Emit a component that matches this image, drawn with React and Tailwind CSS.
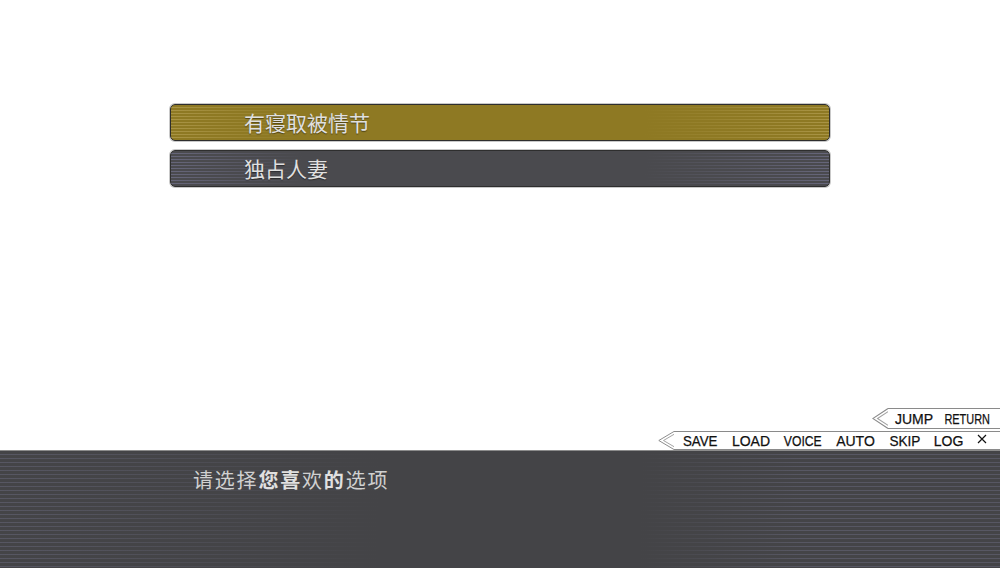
import React from "react";

const cjk = { fontFamily: '"Noto Sans CJK SC", "Noto Sans", sans-serif' };
const latin = { fontFamily: '"Liberation Sans", Arial, sans-serif' };

const Chevron = () => (
  <svg width="16" height="100%" viewBox="0 0 16 20" preserveAspectRatio="none" className="h-full shrink-0">
    <polygon points="16,0.5 0.8,10 16,19.5" fill="#ffffff" />
    <polyline points="16,0.5 0.8,10 16,19.5" fill="none" stroke="#8a8a8a" strokeWidth="1" />
    <polyline points="16,3.5 5.5,10 16,16.5" fill="none" stroke="#a0a0a0" strokeWidth="1" />
  </svg>
);

const CloseMark = () => (
  <svg width="10" height="10" viewBox="0 0 10 10" className="-mt-[3px]">
    <path d="M1 1 L9 9 M9 1 L1 9" stroke="#111" strokeWidth="1.2" fill="none" />
  </svg>
);

// widths measured from the reference, squeeze keeps each word inside its slot
const Tab = ({ items, className, gap, pl, pr }) => (
  <div className={`flex self-end ${className}`}>
    <Chevron />
    <div
      className={`flex items-center bg-white border-y border-[#8a8a8a] text-[14px] text-[#111] [-webkit-text-stroke:0.25px_#111] ${gap} ${pl} ${pr}`}
      style={latin}
    >
      {items.map((it) => (
        <span key={it.k || it.t} className={`inline-flex justify-center leading-none whitespace-nowrap ${it.w}`}>
          <span className={`inline-block ${it.s}`}>{it.t}</span>
        </span>
      ))}
    </div>
  </div>
);

const topItems = [
  { t: "JUMP", w: "w-[38px]", s: "scale-x-100" },
  { t: "RETURN", w: "w-[45px]", s: "scale-x-[0.78]" },
];

const bottomItems = [
  { t: "SAVE", w: "w-[36px]", s: "scale-x-[0.95]" },
  { t: "LOAD", w: "w-[38px]", s: "scale-x-100" },
  { t: "VOICE", w: "w-[38px]", s: "scale-x-[0.87]" },
  { t: "AUTO", w: "w-[39px]", s: "scale-x-100" },
  { t: "SKIP", w: "w-[31px]", s: "scale-x-[0.97]" },
  { t: "LOG", w: "w-[29px]", s: "scale-x-100" },
  { k: "close", t: <CloseMark />, w: "w-[10px]", s: "flex" },
];

const Choice = ({ label, gold }) => (
  <button
    className={`flex items-center h-[37px] w-full rounded-[5px] border border-[#2e2e2e] shadow-[0_0_0_1px_#c9c9c9] pl-[73px] text-left text-[21px] text-[#e0e0e0] [text-shadow:0_1px_1px_rgba(0,0,0,0.45)] ${
      gold
        ? "bg-[linear-gradient(90deg,transparent_0%,#8e7923_20%,#8e7923_72%,transparent_100%),repeating-linear-gradient(180deg,#8e7923_0px,#8e7923_2px,#a99445_2px,#a99445_3px)]"
        : "bg-[linear-gradient(90deg,transparent_0%,#4a4a4e_20%,#4a4a4e_72%,transparent_100%),repeating-linear-gradient(180deg,#4a4a4e_0px,#4a4a4e_2px,#66667a_2px,#66667a_3px)]"
    }`}
    style={cjk}
  >
    {label}
  </button>
);

export default function App() {
  return (
    <div className="w-[1000px] h-[568px] bg-white flex flex-col overflow-hidden">
      <div className="pt-[104px] pl-[170px] w-[830px] flex flex-col gap-[9px]">
        <Choice label="有寝取被情节" gold />
        <Choice label="独占人妻" />
      </div>

      <div className="flex-1" />

      <Tab items={topItems} className="h-[21px] mb-[2px]" gap="gap-[12px]" pl="pl-[7px]" pr="pr-[10px]" />
      <Tab items={bottomItems} className="h-[19px]" gap="gap-[14px]" pl="pl-[8px]" pr="pr-[13px]" />

      <div className="h-[118px] border-t border-[#8c8c8c] bg-[linear-gradient(90deg,transparent_0%,#444447_38%,#444447_64%,transparent_80%),repeating-linear-gradient(180deg,#444447_0px,#444447_3px,#575763_3px,#575763_4px)] pt-[16px] pl-[193px]">
        <div className="text-[20px] leading-[26px] text-[#d0d0d0] tracking-[1.8px]" style={cjk}>
          请选择<span className="font-bold text-[#e0e0e0]">您喜</span>欢<span className="font-bold text-[#e0e0e0]">的</span>选项
        </div>
      </div>
    </div>
  );
}
